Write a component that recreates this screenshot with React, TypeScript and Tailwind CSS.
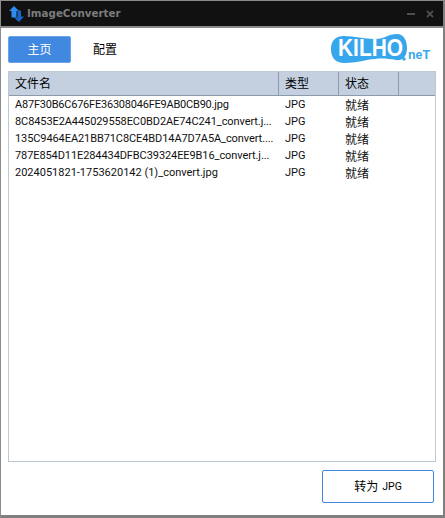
const font = { fontFamily: 'Roboto, "Noto Sans CJK SC", sans-serif' };

const rows = [
  { name: "A87F30B6C676FE36308046FE9AB0CB90.jpg", cls: "tracking-[-0.22px]" },
  { name: "8C8453E2A445029558EC0BD2AE74C241_convert.j...", cls: "tracking-[-0.09px]" },
  { name: "135C9464EA21BB71C8CE4BD14A7D7A5A_convert....", cls: "tracking-[-0.09px]" },
  { name: "787E854D11E284434DFBC39324EE9B16_convert.j...", cls: "tracking-[-0.09px]" },
  { name: "2024051821-1753620142 (1)_convert.jpg", cls: "tracking-normal" },
];

function AppIcon() {
  return (
    <svg width="15" height="16" viewBox="0 0 15 16" className="shrink-0">
      <path d="M5 0 L10 5 L7.5 5 L7.5 11.5 L2.5 11.5 L2.5 5 L0 5 Z" fill="#2f8df0" />
      <path d="M8.5 4.5 L12 4.5 L12 10.5 L15 10.5 L10 16 L5 11.5 L8.5 11.5 Z" fill="#1766c8" />
    </svg>
  );
}

function Logo() {
  return (
    <svg width="100" height="32" viewBox="0 0 100 32">
      <path d="M0 16 C0 7 5 3 13 3 C24 3 32 6 44 6 C54 6 57 1 66 1 C73 1 76 8 76 15 C76 23 72 28 65 27 C55 25 47 25 36 27 C28 29 20 30 13 30 C5 30 0 25 0 16 Z" fill="#38a6ec" />
      <text x="7" y="23" fill="#ffffff" fontSize="23.5" fontWeight="700" fontFamily="Liberation Sans" textLength="65" lengthAdjust="spacingAndGlyphs">KILHO</text>
      <circle cx="73" cy="26" r="1.7" fill="#38a6ec" />
      <text x="77" y="26" fill="#38a6ec" fontSize="13" fontWeight="700" fontFamily="Liberation Sans" textLength="22" lengthAdjust="spacingAndGlyphs">neT</text>
    </svg>
  );
}

export default function App() {
  return (
    <div style={font} className="w-[445px] h-[518px] flex flex-col bg-[#f8f8f8] border border-[#8c8c8c] border-r-2 border-b-3 border-r-[#808080] border-b-[#808080] overflow-hidden text-[12px] text-black">
      <div className="h-[25px] shrink-0 bg-[#111111] flex items-center pl-[8px] pr-[9px] border-b-2 border-[#8a8a8a] box-content">
        <AppIcon />
        <span className="ml-[3px] text-[10.3px] font-bold text-[#7c7c7c] font-['DejaVu_Sans']">ImageConverter</span>
        <div className="ml-auto flex items-center gap-[11px] text-[#4e4e4e]">
          <span className="w-[8px] h-[2px] bg-[#4e4e4e]" />
          <svg width="8" height="8" viewBox="0 0 8 8"><path d="M1 1 L7 7 M7 1 L1 7" stroke="#4e4e4e" strokeWidth="1.8" /></svg>
        </div>
      </div>

      <div className="flex-1 flex flex-col bg-white px-[7px] min-h-0">
        <div className="h-[43px] shrink-0 flex items-start relative">
          <div className="mt-[8px] w-[63px] h-[27px] bg-[#4088e0] border border-[#6aa3ea] rounded-[2px] flex items-center justify-center text-white text-[12px]">主页</div>
          <div className="mt-[8px] ml-[22px] h-[27px] flex items-center text-[12px]">配置</div>
          <div className="absolute right-[5px] top-[5px]"><Logo /></div>
        </div>

        <div className="h-[391px] shrink-0 border border-[#bcc8d4] flex flex-col">
          <div className="h-[23px] shrink-0 flex bg-[#c4d0e0] border-b border-[#8c9bac] box-content text-[12px]">
            <div className="w-[270px] pl-[6px] flex items-center border-r border-[#8c9bac]">文件名</div>
            <div className="w-[60px] pl-[6px] flex items-center border-r border-[#8c9bac]">类型</div>
            <div className="w-[60px] pl-[6px] flex items-center border-r border-[#8c9bac]">状态</div>
            <div className="flex-1" />
          </div>
          <div className="flex-1 pt-[1px]">
            {rows.map((r) => (
              <div key={r.name} className="h-[17px] flex items-center text-[11px] text-[#111]">
                <div className={"w-[270px] pl-[6px] whitespace-nowrap overflow-hidden " + r.cls}>{r.name}</div>
                <div className="w-[60px] pl-[6px]">JPG</div>
                <div className="w-[60px] pl-[6px] text-[12px]">就绪</div>
              </div>
            ))}
          </div>
        </div>

        <div className="flex justify-end pt-[8px] pr-[2px]">
          <div className="w-[112px] h-[33px] border border-[#3f87e0] rounded-[2px] flex items-center justify-center text-[12px] bg-white">转为<span className="ml-[4px] text-[10.5px]">JPG</span></div>
        </div>
      </div>
    </div>
  );
}
